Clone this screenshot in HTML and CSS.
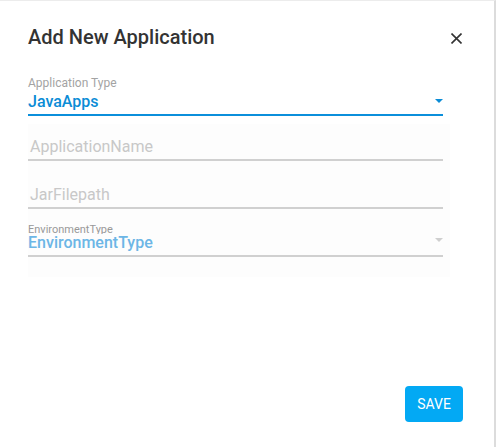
FILE: index.html
```html
<!DOCTYPE html>
<html lang="en">
<head>
<meta charset="utf-8">
<title>Add New Application</title>
<link rel="stylesheet" href="styles.css">
</head>
<body>
<div class="dialog">
  <div class="header">
    <h1 class="title">Add New Application</h1>
    <button class="close" aria-label="Close">
      <svg width="11" height="11" viewBox="0 0 11 11"><path d="M0.5 0.5L10.5 10.5M10.5 0.5L0.5 10.5" stroke="#333" stroke-width="1.6" fill="none"/></svg>
    </button>
  </div>
  <div class="form">
    <div class="field select active">
      <span class="label">Application Type</span>
      <span class="value">JavaApps</span>
      <span class="arrow"></span>
    </div>
    <div class="disabled-area">
      <div class="field input">
        <span class="placeholder">ApplicationName</span>
      </div>
      <div class="field input">
        <span class="placeholder">JarFilepath</span>
      </div>
      <div class="field select disabled">
        <span class="label small">EnvironmentType</span>
        <span class="value">EnvironmentType</span>
        <span class="arrow"></span>
      </div>
    </div>
  </div>
  <div class="footer">
    <button class="save">SAVE</button>
  </div>
</div>
</body>
</html>
```
FILE: styles.css
```css
* { box-sizing: border-box; }
html, body { margin: 0; padding: 0; background: #fff; }
body { font-family: Roboto, "Noto Sans", Arial, sans-serif; }
.dialog {
  width: 496px;
  height: 447px;
  border-top: 1px solid #ececec;
  border-right: 2px solid #dcdcdc;
  display: flex;
  flex-direction: column;
}
.header {
  display: flex;
  align-items: center;
  justify-content: space-between;
  padding: 22px 32px 0 28px;
  height: 50px;
}
.title {
  margin: 0;
  font-size: 20px;
  line-height: 24px;
  font-weight: 500;
  color: #333;
}
.close {
  border: 0;
  background: none;
  padding: 0;
  width: 11px;
  height: 11px;
  display: flex;
  margin-top: 2px;
}
.form {
  padding: 23px 0 0 28px;
  width: 450px;
}
.field {
  position: relative;
  display: flex;
  flex-direction: column;
  justify-content: flex-end;
  width: 415px;
  border-bottom: 2px solid #d0d0d0;
  padding-bottom: 3px;
}
.field.active {
  border-bottom-color: #0b8fdb;
  height: 42px;
  padding-bottom: 2px;
}
.field.active .label { margin-bottom: 2px; }
.label {
  font-size: 12px;
  line-height: 14px;
  color: #a3a3a3;
}
.value {
  font-size: 16px;
  line-height: 20px;
  font-weight: 500;
  color: #0b8cd6;
}
.arrow {
  position: absolute;
  right: 0;
  bottom: 11px;
  width: 0;
  height: 0;
  border-left: 4px solid transparent;
  border-right: 4px solid transparent;
  border-top: 4px solid #0b8cd6;
}
.disabled-area {
  margin-top: 8px;
  background: #fdfdfd;
  padding: 0 0 20px 0;
  display: flex;
  flex-direction: column;
  gap: 11px;
}
.field.input { height: 37px; padding-left: 2px; padding-bottom: 2px; }
.placeholder {
  font-size: 16px;
  line-height: 20px;
  color: #c8c8c8;
}
.field.disabled { height: 37px; }
.field.disabled .label.small {
  font-size: 11px;
  line-height: 11px;
  height: 10px;
  overflow: hidden;
  color: #999;
}
.field.disabled .value { color: #6cb6e6; line-height: 18px; }
.field.disabled .arrow { border-top-color: #cfcfcf; bottom: 13px; }
.footer {
  margin-top: auto;
  display: flex;
  justify-content: flex-end;
  padding: 0 31px 25px 0;
}
.save {
  width: 58px;
  height: 36px;
  border: 0;
  border-radius: 4px;
  background: #03a9f4;
  color: #fff;
  font-family: Roboto, Arial, sans-serif;
  font-size: 14px;
  font-weight: 400;
}
```
